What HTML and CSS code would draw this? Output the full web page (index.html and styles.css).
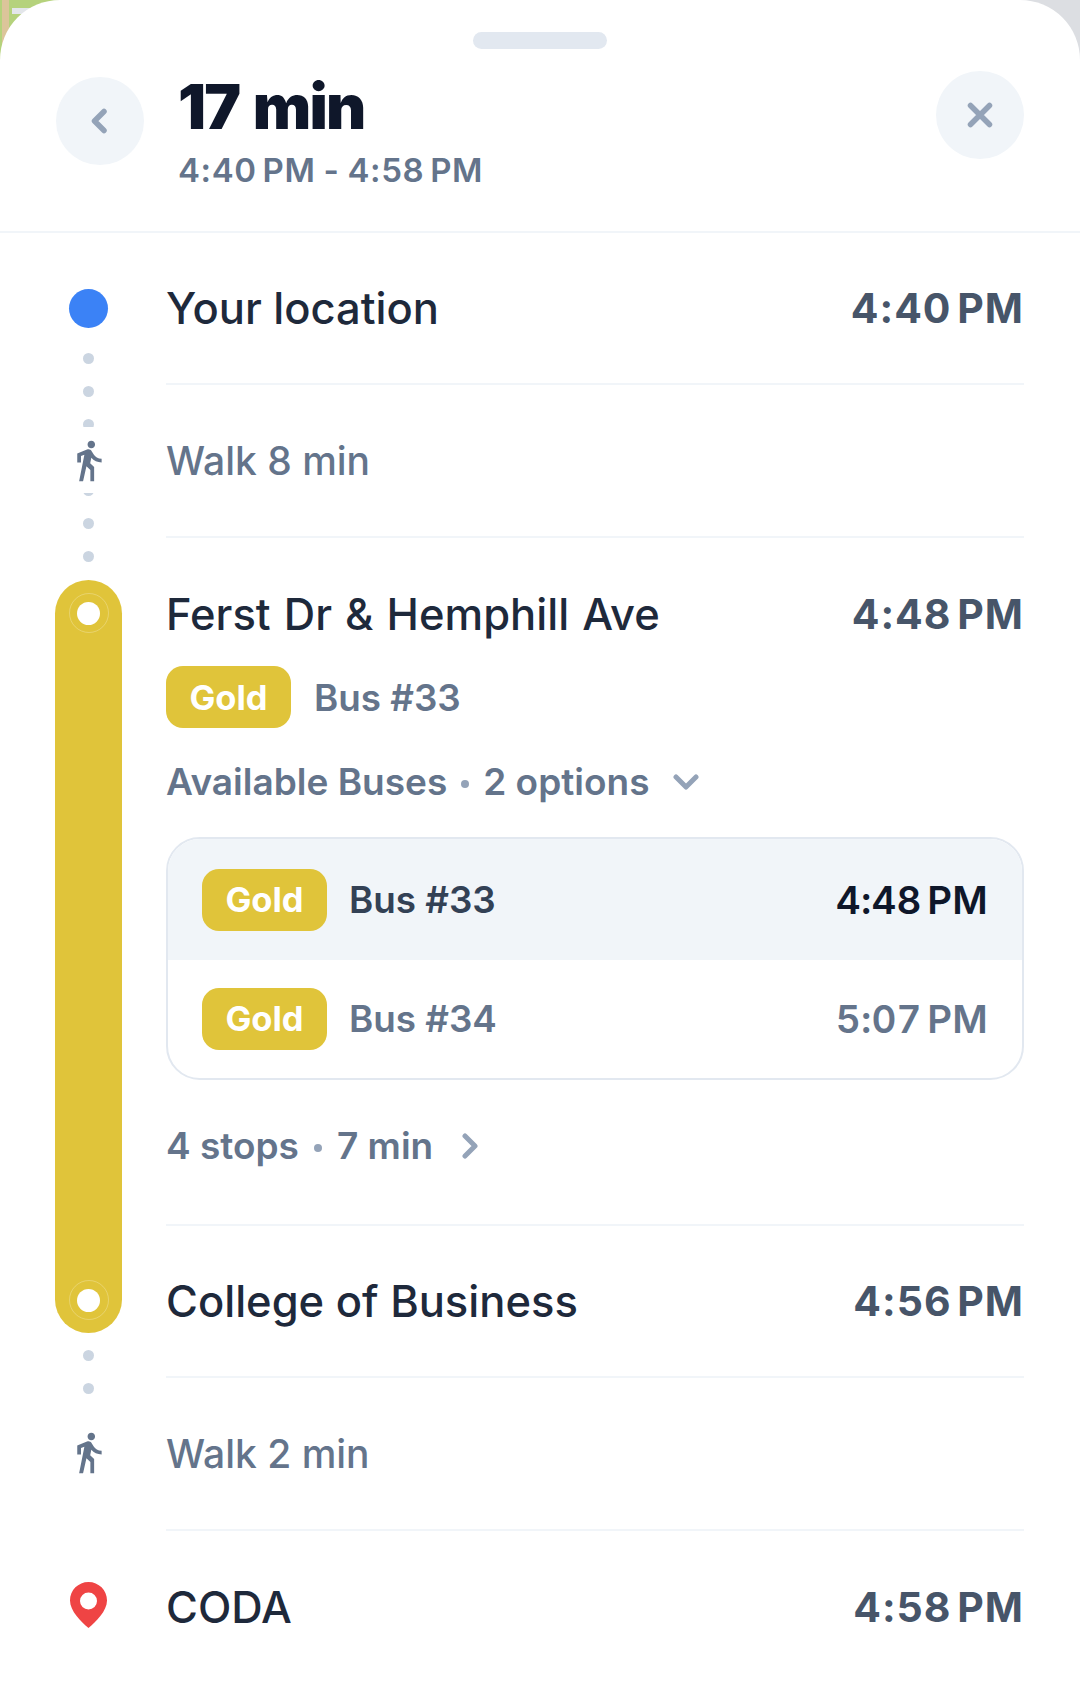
FILE: index.html
```html
<!DOCTYPE html>
<html lang="en">
<head>
<meta charset="utf-8">
<title>Trip details</title>
<link rel="stylesheet" href="styles.css">
</head>
<body>
<svg class="map" viewBox="0 0 1080 70" aria-hidden="true">
  <rect x="0" y="0" width="70" height="70" fill="#b5d27c"/>
  <rect x="2" y="0" width="7" height="70" fill="#dcc59a"/>
  <rect x="12" y="8" width="32" height="6" fill="#e3e6ea"/>
  <rect x="1000" y="0" width="80" height="70" fill="#dcdee2"/>
</svg>
<main class="sheet">
  <div class="handle"></div>
  <header class="header">
    <button class="round-btn back" type="button" aria-label="Back">
      <svg class="btn-icon" viewBox="0 0 32 32"><path d="M20 6.5L10.5 16l9.5 9.5"/></svg>
    </button>
    <div class="summary">
      <h1 class="duration">17 min</h1>
      <p class="range"><span>4:40 PM</span><span class="dash">-</span><span>4:58 PM</span></p>
    </div>
    <button class="round-btn close" type="button" aria-label="Close">
      <svg class="btn-icon" viewBox="0 0 32 32"><path d="M6.5 6.5l19 19M25.500 6.500l-19 19"/></svg>
    </button>
  </header>

  <section class="trip">
    <div class="rail">
      <div class="origin-dot"></div>
      <div class="dots dots-long">
        <i></i><i></i><i></i><i></i><i></i><i></i><i></i>
        <div class="walk-mask">
          <svg class="walker" viewBox="0 0 24 24"><path d="M13.5 5.5c1.1 0 2-.9 2-2s-.9-2-2-2-2 .9-2 2 .9 2 2 2zM9.800 8.900L7 23h2.100l1.800-8 2.100 2v6h2v-7.500l-2.100-2 .6-3C14.800 12 16.800 13 19 13v-2c-1.900 0-3.500-1-4.300-2.400l-1-1.600c-.4-.6-1-1-1.700-1-.3 0-.5.1-.8.1L6 8.300V13h2V9.600l1.800-.7"/></svg>
        </div>
      </div>
      <div class="route-bar">
        <span class="stop-ring"><span class="stop-core"></span></span>
        <span class="stop-ring"><span class="stop-core"></span></span>
      </div>
      <div class="dots dots-short"><i></i><i></i></div>
      <svg class="walker walker-flow" viewBox="0 0 24 24"><path d="M13.5 5.5c1.1 0 2-.9 2-2s-.9-2-2-2-2 .9-2 2 .9 2 2 2zM9.800 8.900L7 23h2.100l1.800-8 2.100 2v6h2v-7.500l-2.100-2 .6-3C14.800 12 16.800 13 19 13v-2c-1.900 0-3.500-1-4.300-2.400l-1-1.600c-.4-.6-1-1-1.700-1-.3 0-.5.1-.8.1L6 8.300V13h2V9.600l1.800-.7"/></svg>
      <svg class="pin" viewBox="0 0 37 46"><path fill-rule="evenodd" d="M18.5 0C8.300 0 0 8.200 0 18.400 0 29 11 39.500 18.500 46 26 39.500 37 29 37 18.400 37 8.200 28.700 0 18.500 0zm0 10.500a8.500 8.500 0 1 1 0 17 8.500 8.500 0 0 1 0-17z"/></svg>
    </div>

    <div class="legs">
      <div class="row row-place">
        <span class="place">Your location</span>
        <span class="time">4:40 PM</span>
      </div>
      <div class="row row-walk">
        <span class="walk">Walk 8 min</span>
      </div>
      <div class="row-ride">
        <div class="ride-head">
          <span class="place place-spaced">Ferst Dr &amp; Hemphill Ave</span>
          <span class="time">4:48 PM</span>
        </div>
        <div class="bus-line">
          <span class="badge">Gold</span>
          <span class="bus-name">Bus #33</span>
        </div>
        <div class="meta meta-options">
          <span>Available Buses</span><span class="sep"></span><span>2 options</span>
          <svg class="chev chev-down" viewBox="0 0 26 16"><path d="M3 3l10 10L23 3"/></svg>
        </div>
        <div class="options">
          <div class="option option-active">
            <span class="badge">Gold</span>
            <span class="bus-name">Bus #33</span>
            <span class="option-time">4:48 PM</span>
          </div>
          <div class="option">
            <span class="badge">Gold</span>
            <span class="bus-name">Bus #34</span>
            <span class="option-time">5:07 PM</span>
          </div>
        </div>
        <div class="meta meta-stops">
          <span>4 stops</span><span class="sep"></span><span>7 min</span>
          <svg class="chev chev-right" viewBox="0 0 16 26"><path d="M3 3l10 10L3 23"/></svg>
        </div>
      </div>
      <div class="row row-place">
        <span class="place">College of Business</span>
        <span class="time">4:56 PM</span>
      </div>
      <div class="row row-walk">
        <span class="walk">Walk 2 min</span>
      </div>
      <div class="row row-place row-last">
        <span class="place">CODA</span>
        <span class="time">4:58 PM</span>
      </div>
    </div>
  </section>
</main>
</body>
</html>
```

FILE: styles.css
```css
* { box-sizing: border-box; }

html, body {
  margin: 0;
  padding: 0;
  height: 1683px;
  overflow: hidden;
  background: #fff;
  font-family: Inter, "Liberation Sans", sans-serif;
}

.map {
  position: absolute;
  top: 0;
  left: 0;
  width: 1080px;
  height: 70px;
}

.sheet {
  position: relative;
  height: 1683px;
  background: #fff;
  border-radius: 60px 60px 0 0;
}

.handle {
  position: absolute;
  top: 32px;
  left: 473px;
  width: 134px;
  height: 17px;
  border-radius: 9px;
  background: #e2e8f0;
}

.header {
  display: flex;
  align-items: flex-start;
  height: 233px;
  padding: 0 56px;
  border-bottom: 2px solid #f1f5f9;
}

.round-btn {
  flex: none;
  width: 88px;
  height: 88px;
  padding: 0;
  border: 0;
  border-radius: 50%;
  background: #f1f5f9;
  display: flex;
  align-items: center;
  justify-content: center;
}

.back { margin-top: 77px; }
.close { margin-top: 71px; margin-left: auto; }

.btn-icon {
  width: 32px;
  height: 32px;
  fill: none;
  stroke: #94a3b8;
  stroke-width: 5.5;
  stroke-linecap: round;
  stroke-linejoin: round;
}

.summary {
  margin-left: 34px;
  padding-top: 72px;
}

.duration {
  margin: 0;
  font-size: 62px;
  line-height: 70px;
  font-weight: 900;
  letter-spacing: -1.8px;
  word-spacing: 3px;
  color: #0f172a;
}

.range {
  display: flex;
  margin: 8px 0 0;
  font-size: 33px;
  line-height: 40px;
  font-weight: 600;
  letter-spacing: 0.6px;
  word-spacing: -3px;
  color: #64748b;
}

.dash { margin: 0 8px; }

.trip {
  display: flex;
  padding: 0 56px 0 55px;
}

.rail {
  flex: none;
  width: 111px;
  display: flex;
  flex-direction: column;
  align-items: flex-start;
}

.origin-dot {
  width: 39px;
  height: 39px;
  margin: 56px 0 0 14px;
  border-radius: 50%;
  background: #3b82f6;
}

.dots {
  position: relative;
  width: 67px;
  display: flex;
  flex-direction: column;
  align-items: center;
  gap: 22px;
}

.dots i {
  display: block;
  width: 11px;
  height: 11px;
  border-radius: 50%;
  background: #cbd5e1;
}

.dots-long { margin-top: 25px; }
.dots-short { margin-top: 17px; }

.walk-mask {
  position: absolute;
  top: 74px;
  left: 0;
  width: 67px;
  height: 66px;
  display: flex;
  align-items: center;
  justify-content: center;
  background: #fff;
}

.walker {
  width: 45px;
  height: 45px;
  fill: #64748b;
}

.walker-flow {
  margin: 36px 0 0 11px;
  flex: none;
}

.route-bar {
  width: 67px;
  height: 753px;
  margin-top: 18px;
  border-radius: 34px;
  background: #e0c43a;
  display: flex;
  flex-direction: column;
  justify-content: space-between;
  align-items: center;
  padding: 13px 0;
}

.stop-ring {
  width: 40px;
  height: 40px;
  border-radius: 50%;
  border: 1px solid rgba(255, 255, 255, 0.25);
  display: flex;
  align-items: center;
  justify-content: center;
}

.stop-core {
  width: 23px;
  height: 23px;
  border-radius: 50%;
  background: #fff;
}

.pin {
  width: 37px;
  height: 46px;
  margin: 107px 0 0 15px;
  fill: #ef4444;
  flex: none;
}

.legs {
  flex: 1;
  min-width: 0;
}

.row {
  display: flex;
  align-items: center;
  justify-content: space-between;
  height: 152px;
  border-bottom: 2px solid #f1f5f9;
}

.row-walk { height: 153px; }
.row-last { border-bottom: 0; }

.place {
  font-size: 43.5px;
  line-height: 52px;
  font-weight: 500;
  color: #1e293b;
}

.place-spaced { word-spacing: 1.5px; }

.time {
  font-size: 41px;
  line-height: 52px;
  font-weight: 700;
  word-spacing: -5px;
  letter-spacing: 1px;
  color: #475569;
}

.walk {
  font-size: 39px;
  line-height: 48px;
  font-weight: 500;
  color: #64748b;
}

.row-ride {
  height: 688px;
  padding-top: 50px;
  border-bottom: 2px solid #f1f5f9;
}

.ride-head {
  display: flex;
  justify-content: space-between;
  align-items: center;
}

.bus-line {
  display: flex;
  align-items: center;
  gap: 23px;
  margin-top: 26px;
}

.badge {
  flex: none;
  width: 125px;
  height: 62px;
  border-radius: 17px;
  background: #e0c43a;
  color: #fff;
  font-size: 34.500px;
  font-weight: 700;
  display: flex;
  align-items: center;
  justify-content: center;
}

.bus-name {
  font-size: 36.800px;
  font-weight: 600;
  color: #64748b;
}

.meta {
  display: flex;
  align-items: center;
  font-size: 37px;
  line-height: 44px;
  font-weight: 600;
  color: #64748b;
}

.meta-options { margin-top: 32px; }
.meta-stops { margin-top: 44px; }

.sep {
  width: 8px;
  height: 8px;
  margin: 4px 14px 0;
  border-radius: 50%;
  background: #94a3b8;
}

.meta-stops .sep { margin: 4px 15px 0; }

.chev {
  fill: none;
  stroke: #94a3b8;
  stroke-width: 5;
  stroke-linecap: round;
  stroke-linejoin: round;
}

.chev-down { width: 26px; height: 16px; margin-left: 24px; }
.chev-right { width: 16px; height: 26px; margin-left: 29px; }

.options {
  margin-top: 33px;
  height: 243px;
  border: 2.5px solid #e2e8f0;
  border-radius: 34px;
  overflow: hidden;
}

.option {
  display: flex;
  align-items: center;
  height: 117px;
  padding: 0 34px;
}

.option .bus-name {
  margin-left: 22px;
  color: #64748b;
}

.option-active {
  height: 121px;
  background: #f1f5f9;
}

.option-active .bus-name { color: #334155; }

.option-time {
  margin-left: auto;
  font-size: 38.500px;
  font-weight: 600;
  font-variant-numeric: tabular-nums;
  letter-spacing: 0.2px;
  word-spacing: -5px;
  color: #64748b;
}

.option-active .option-time {
  color: #0f172a;
}
```
